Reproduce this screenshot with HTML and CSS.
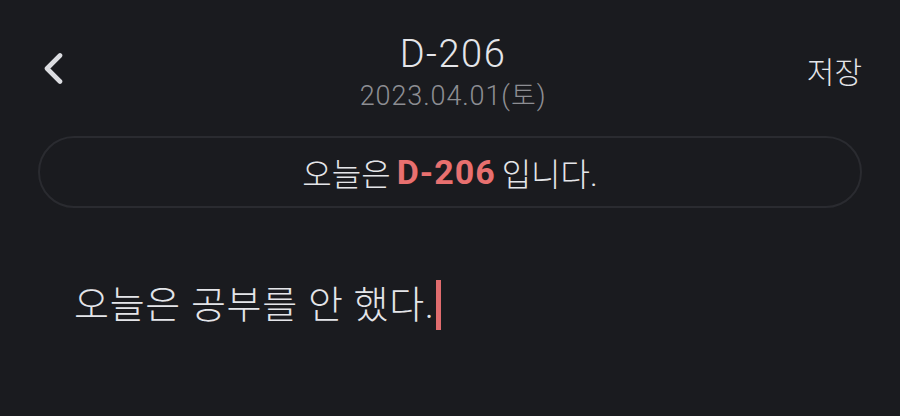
FILE: index.html
```html
<!DOCTYPE html>
<html lang="ko">
<head>
  <meta charset="UTF-8" />
  <title>D-206</title>
  <link rel="stylesheet" href="styles.css">
</head>
<body>
  <div class="header">
    <button class="back" aria-label="뒤로">
      <svg width="22" height="36" viewBox="0 0 22 36">
        <polyline points="16,4.5 3,17.5 16,30.5" fill="none" stroke="#dcdde1" stroke-width="4.6" stroke-linecap="round" stroke-linejoin="round" />
      </svg>
    </button>
    <div class="title">
      <div class="dday">D-206</div>
      <div class="date">2023.04.01(토)</div>
    </div>
    <button class="save">저장</button>
  </div>

  <div class="banner">오늘은 <b>D-206</b> 입니다.</div>

  <div class="note">오늘은 공부를 안 했다.<span class="cursor"></span></div>
</body>
</html>
```

FILE: styles.css
```css
body {
  margin: 0;
  background: #1a1b1f;
  color: #e4e5e9;
  font-family: Roboto, "Noto Sans CJK KR", sans-serif;
  font-weight: 300;
}
button {
  background: none;
  border: none;
  padding: 0;
  color: inherit;
  font-family: inherit;
  font-weight: inherit;
  cursor: pointer;
}
.header {
  display: grid;
  grid-template-columns: 1fr auto 1fr;
  padding: 31px 38px 0 44px;
}
.back {
  justify-self: start;
  align-self: start;
  margin-top: 20px;
  display: flex;
}
.title {
  text-align: center;
}
.dday {
  font-size: 38px;
  line-height: 46px;
  letter-spacing: 1.5px;
}
.date {
  margin-top: 3px;
  font-size: 27px;
  line-height: 32px;
  letter-spacing: 0.9px;
  color: #8d8e93;
}
.save {
  justify-self: end;
  align-self: start;
  margin-top: 22px;
  font-size: 30px;
  line-height: 40px;
}
.banner {
  margin: 24px 38px 0;
  height: 68px;
  border: 2px solid #2a2b30;
  border-radius: 36px;
  display: flex;
  align-items: center;
  justify-content: center;
  font-size: 32px;
}
.banner b {
  color: #e8706f;
  font-weight: 700;
  font-size: 34px;
  letter-spacing: 1px;
  margin: 0 6px;
}
.note {
  margin: 72px 0 0 74px;
  font-size: 38px;
  line-height: 50px;
  letter-spacing: 0.7px;
}
.cursor {
  display: inline-block;
  width: 5px;
  height: 50px;
  margin-left: 1px;
  vertical-align: top;
  background: #e06c6e;
}
```
